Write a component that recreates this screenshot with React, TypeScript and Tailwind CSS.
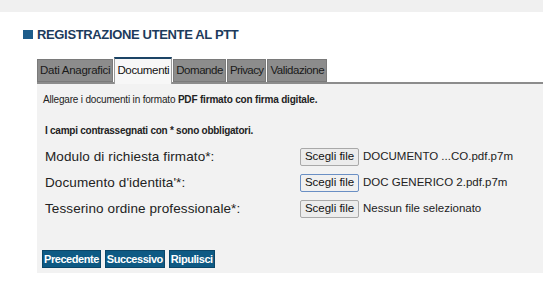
import React from "react";

const tabs = ["Dati Anagrafici", "Documenti", "Domande", "Privacy", "Validazione"];

function FileRow({ label, file, focused }: { label: string; file: string; focused?: boolean }) {
  return (
    <div className="flex items-center h-[26px]">
      <div className="w-[263px] pl-[8px] text-[13.5px] text-[#222] tracking-[0.1px]">{label}</div>
      <div className="flex items-center">
        <span
          className={
            "h-[18px] w-[59px] flex items-center justify-center text-[11.5px] text-[#111] rounded-[2px] border " +
            (focused ? "border-[#6a8fc4] bg-[#f0f0f0]" : "border-[#a9a9a9] bg-[#ececec]")
          }
        >
          Scegli file
        </span>
        <span className="ml-[4px] text-[11.5px] text-[#222]">{file}</span>
      </div>
    </div>
  );
}

export default function App() {
  return (
    <div className="w-[555px] h-[282px] bg-white overflow-hidden" style={{ fontFamily: '"Liberation Sans", Arial, sans-serif' }}>
      <div className="h-[12px] w-[543px] bg-[#f0f0f0]" />
      <div className="flex items-center pl-[23px] mt-[17px] h-[10px]">
        <div className="w-[10px] h-[9px] bg-[#1d5c8a]" />
        <div className="ml-[4px] text-[13px] font-bold text-[#1c3b5c] leading-none tracking-[-0.35px]">
          REGISTRAZIONE UTENTE AL PTT
        </div>
      </div>
      <div className="ml-[37px] mt-[18px] w-[506px]">
        <div className="flex items-end h-[27px] border-b-2 border-[#8c8c8c]">
          {tabs.map((t) => {
            const active = t === "Documenti";
            return active ? (
              <div
                key={t}
                className="h-[27px] -mb-[2px] mr-[1px] px-[2px] pb-[2px] flex items-center bg-[#f7f7f7] border-t-[2px] border-t-[#1c4466] border-x border-x-[#9a9a9a] text-[11.5px] text-[#111] tracking-[-0.35px]"
              >
                {t}
              </div>
            ) : (
              <div
                key={t}
                className={
                  "h-[23px] mr-[1px] px-[2px] flex items-center bg-[#8c8c8c] border border-[#7a7a7a] text-[11.5px] text-[#1a1a1a] " +
                  (t === "Dati Anagrafici" ? "tracking-[-0.25px]" : t === "Privacy" ? "tracking-[-0.6px]" : "tracking-[-0.45px]")
                }
              >
                {t}
              </div>
            );
          })}
        </div>
        <div className="bg-[#f2f2f2] h-[189px] pt-[9px]">
          <div className="pl-[6px] text-[10px] leading-[14px] text-[#222] tracking-[-0.18px]">
            Allegare i documenti in formato <b>PDF firmato con firma digitale.</b>
          </div>
          <div className="pl-[8px] mt-[17px] text-[10px] leading-[14px] font-bold text-[#222] tracking-[-0.25px]">
            I campi contrassegnati con * sono obbligatori.
          </div>
          <div className="mt-[6px]">
            <FileRow label="Modulo di richiesta firmato*:" file="DOCUMENTO ...CO.pdf.p7m" />
            <FileRow label="Documento d'identita'*:" file="DOC GENERICO 2.pdf.p7m" focused />
            <FileRow label="Tesserino ordine professionale*:" file="Nessun file selezionato" />
          </div>
          <div className="flex gap-[4px] pl-[5px] mt-[28px]">
            {["Precedente", "Successivo", "Ripulisci"].map((b) => (
              <span
                key={b}
                className="h-[18px] px-[1px] flex items-center bg-[#0e5a84] text-white font-bold text-[11px] border border-[#0a4668] tracking-[-0.45px]"
              >
                {b}
              </span>
            ))}
          </div>
        </div>
      </div>
    </div>
  );
}
